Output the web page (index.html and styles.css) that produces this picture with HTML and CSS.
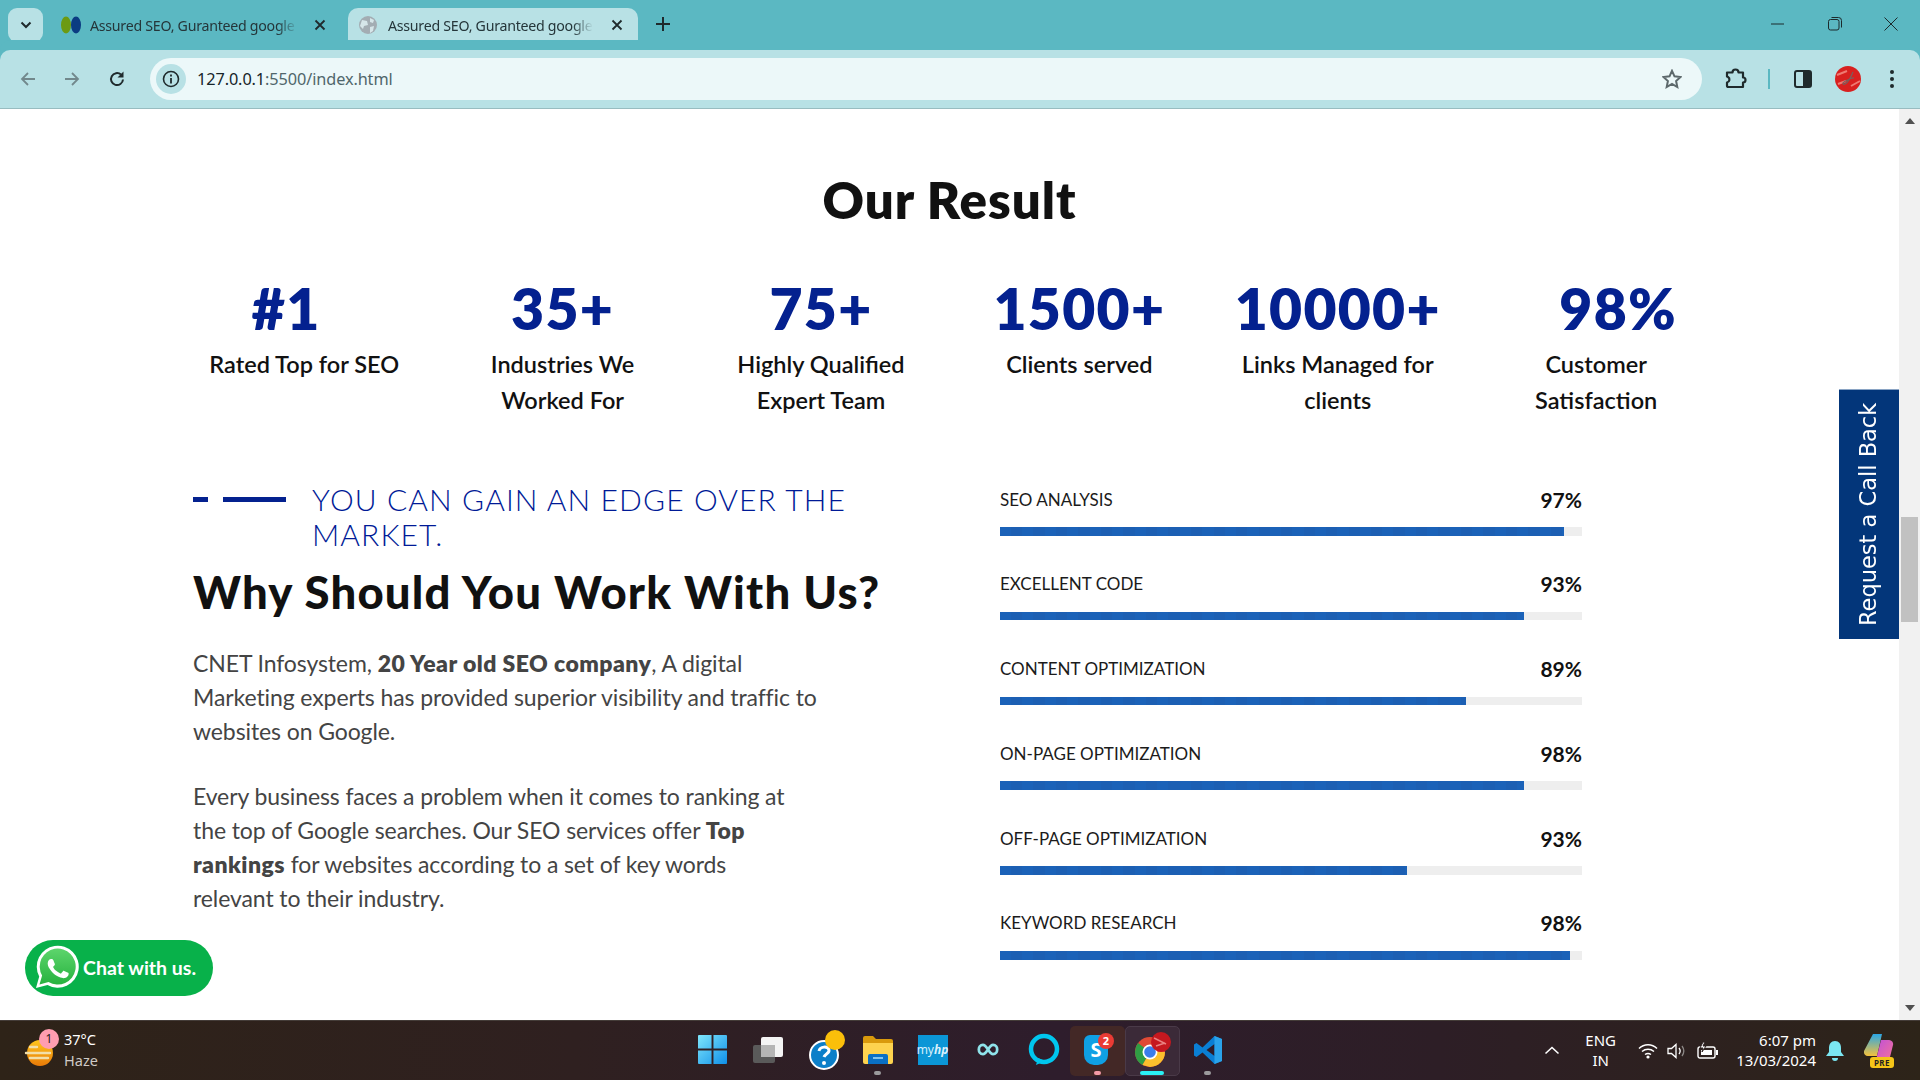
FILE: index.html
```html
<!DOCTYPE html>
<html lang="en">
<head>
<meta charset="utf-8">
<title>Assured SEO, Guranteed google ranking</title>
<link rel="stylesheet" href="styles.css">
</head>
<body>
<div class="screen">
  <header class="tabstrip">
    <button class="tab-search"><svg width="12" height="8" viewBox="0 0 12 8"><path d="M1.5 1.5 6 6l4.5-4.5" fill="none" stroke="#1f2a2c" stroke-width="2"/></svg></button>
    <div class="tab tab-first">
      <svg class="fav" width="22" height="20" viewBox="0 0 22 20"><ellipse cx="6" cy="10" rx="5" ry="8.500" fill="#6c9a12"/><ellipse cx="16" cy="10" rx="5" ry="8.500" fill="#0b3c82"/></svg>
      <span class="tab-title">Assured SEO, Guranteed google</span>
      <svg class="tab-x" width="12" height="12" viewBox="0 0 12 12"><path d="M1.5 1.5l9 9M10.500 1.500l-9 9" stroke="#1f2a2c" stroke-width="1.800"/></svg>
    </div>
    <div class="tab tab-active">
      <svg class="fav" width="20" height="20" viewBox="0 0 20 20"><circle cx="10" cy="10" r="9" fill="#a3adb3"/><path d="M4 5l5 1 1 4-4 1-1 3-3-3zM12 3l4 2-1 3-3-1zM12 12l4-1-1 5-3 2z" fill="#d6e6e9"/></svg>
      <span class="tab-title">Assured SEO, Guranteed google</span>
      <svg class="tab-x" width="12" height="12" viewBox="0 0 12 12"><path d="M1.500 1.500l9 9M10.500 1.500l-9 9" stroke="#1f2a2c" stroke-width="1.800"/></svg>
    </div>
    <svg class="tab-new" width="14" height="14" viewBox="0 0 14 14"><path d="M7 0v14M0 7h14" stroke="#1f2a2c" stroke-width="2"/></svg>
    <div class="win-controls">
      <svg width="14" height="14" viewBox="0 0 14 14"><path d="M0 7h13" stroke="#1c2a2c" stroke-width="1"/></svg>
      <svg width="14" height="14" viewBox="0 0 14 14"><rect x=".5" y="2.500" width="10.500" height="10.500" rx="2" fill="none" stroke="#1c2a2c"/><path d="M3.500.5h7a3 3 0 0 1 3 3v7" fill="none" stroke="#1c2a2c"/></svg>
      <svg width="14" height="14" viewBox="0 0 14 14"><path d="M.5.500l13 13M13.500.500l-13 13" stroke="#1c2a2c"/></svg>
    </div>
  </header>

  <nav class="toolbar">
    <svg class="nav-icon" width="16" height="16" viewBox="0 0 16 16"><path d="M15 8H2M8 2 2 8l6 6" fill="none" stroke="#72888c" stroke-width="1.800"/></svg>
    <svg class="nav-icon" width="16" height="16" viewBox="0 0 16 16"><path d="M1 8h13M8 2l6 6-6 6" fill="none" stroke="#72888c" stroke-width="1.800"/></svg>
    <svg class="nav-icon nav-reload" width="18" height="18" viewBox="0 0 18 18"><path d="M15 9.500A6 6 0 1 1 13 4.600" fill="none" stroke="#1f2a2c" stroke-width="2"/><path d="M15.500 1.500v6h-6z" fill="#1f2a2c"/></svg>
    <div class="omnibox">
      <span class="site-info"><svg width="18" height="18" viewBox="0 0 18 18"><circle cx="9" cy="9" r="7.500" fill="none" stroke="#1f2a2c" stroke-width="1.600"/><path d="M9 8v5.500M9 4.500v2" stroke="#1f2a2c" stroke-width="1.800"/></svg></span>
      <span class="url"><span class="url-host">127.0.0.1</span>:5500/index.html</span>
      <svg class="star" width="20" height="20" viewBox="0 0 20 20"><path d="m10 1.800 2.500 5.500 6 .7-4.400 4 1.200 6L10 15l-5.300 3 1.200-6-4.400-4 6-.7z" fill="none" stroke="#5d696c" stroke-width="2"/></svg>
    </div>
    <div class="toolbar-actions">
      <svg width="22" height="22" viewBox="0 0 22 22"><path d="M2 4.500h5.500a3 3 0 0 1 6 0H18v5a2.500 2.500 0 0 1 0 5V19H3.500a1.500 1.500 0 0 1-1.500-1.500v-3a3 3 0 0 0 1-5.500 3 3 0 0 0-1-.5z" fill="none" stroke="#1f2a2c" stroke-width="2.200" stroke-linejoin="round"/></svg>
      <i class="sep"></i>
      <svg width="18" height="18" viewBox="0 0 18 18"><rect x="1" y="1" width="16" height="16" rx="2" fill="none" stroke="#1f2a2c" stroke-width="2"/><rect x="9" y="1" width="8" height="16" fill="#1f2a2c"/></svg>
      <svg class="avatar" width="26" height="26" viewBox="0 0 26 26"><circle cx="13" cy="13" r="13" fill="#d8201f"/><path d="M2 9l10-4M16 20l9-5M3 18l8-3" stroke="#ee7a72" stroke-width="2"/><path d="M18 6c-2 5-4 10-8 12-2 1-3-1-1-2 4-2 8-5 10-4" fill="none" stroke="#77605f" stroke-width="1.200"/></svg>
      <svg width="6" height="20" viewBox="0 0 6 20"><circle cx="3" cy="3" r="2" fill="#1f2a2c"/><circle cx="3" cy="10" r="2" fill="#1f2a2c"/><circle cx="3" cy="17" r="2" fill="#1f2a2c"/></svg>
    </div>
  </nav>

  <div class="viewport">
    <main class="page">
      <h1 class="title">Our Result</h1>
      <section class="stats">
        <div class="stat"><div class="stat-num stat-num-left">#1</div><div class="stat-label">Rated Top for SEO</div></div>
        <div class="stat"><div class="stat-num">35+</div><div class="stat-label">Industries We<br>Worked For</div></div>
        <div class="stat"><div class="stat-num">75+</div><div class="stat-label">Highly Qualified<br>Expert Team</div></div>
        <div class="stat"><div class="stat-num">1500+</div><div class="stat-label">Clients served</div></div>
        <div class="stat"><div class="stat-num">10000+</div><div class="stat-label">Links Managed for<br>clients</div></div>
        <div class="stat"><div class="stat-num stat-num-right">98%</div><div class="stat-label">Customer<br>Satisfaction</div></div>
      </section>
      <section class="why">
        <div class="why-text">
          <div class="tagline">
            <div class="tagline-mark"><i class="mark-dash"></i><i class="mark-line"></i></div>
            <p class="tagline-text">YOU CAN GAIN AN EDGE OVER THE<br>MARKET.</p>
          </div>
          <h2 class="why-title">Why Should You Work With Us?</h2>
          <p class="copy">CNET Infosystem, <b>20 Year old SEO company</b>, A digital<br>Marketing experts has provided superior visibility and traffic to<br>websites on Google.</p>
          <p class="copy copy-next">Every business faces a problem when it comes to ranking at<br>the top of Google searches. Our SEO services offer <b>Top</b><br><b>rankings</b> for websites according to a set of key words<br>relevant to their industry.</p>
        </div>
        <div class="skills">
          <div class="skill"><div class="skill-head"><span>SEO ANALYSIS</span><b>97%</b></div><div class="track"><div class="fill" style="width:96.900%"></div></div></div>
          <div class="skill"><div class="skill-head"><span>EXCELLENT CODE</span><b>93%</b></div><div class="track"><div class="fill" style="width:90%"></div></div></div>
          <div class="skill"><div class="skill-head"><span>CONTENT OPTIMIZATION</span><b>89%</b></div><div class="track"><div class="fill" style="width:80%"></div></div></div>
          <div class="skill"><div class="skill-head"><span>ON-PAGE OPTIMIZATION</span><b>98%</b></div><div class="track"><div class="fill" style="width:90%"></div></div></div>
          <div class="skill"><div class="skill-head"><span>OFF-PAGE OPTIMIZATION</span><b>93%</b></div><div class="track"><div class="fill" style="width:70%"></div></div></div>
          <div class="skill"><div class="skill-head"><span>KEYWORD RESEARCH</span><b>98%</b></div><div class="track"><div class="fill" style="width:98%"></div></div></div>
        </div>
      </section>
      <a class="callback">Request a Call Back</a>
      <a class="chat">
        <svg width="46" height="46" viewBox="0 0 46 46"><path d="M2 44l3.200-11.500A21 21 0 1 1 13.500 41z" fill="#fff"/><defs><linearGradient id="wa" x1="0" y1="0" x2="0" y2="1"><stop offset="0" stop-color="#5dd56c"/><stop offset="1" stop-color="#27b23f"/></linearGradient></defs><path d="M5.500 40.500l2.600-9A18 18 0 1 1 14.500 38z" fill="url(#wa)"/><path d="M17.400 13.200c-.5-1.100-1-1.100-1.500-1.100h-1.300c-.4 0-1.200.2-1.800.9-.6.700-2.400 2.300-2.400 5.700s2.500 6.600 2.800 7c.3.500 4.800 7.700 11.900 10.500 5.900 2.300 7.100 1.900 8.400 1.700 1.300-.1 4.100-1.700 4.700-3.300.6-1.600.6-3 .4-3.300-.2-.3-.6-.5-1.300-.8-.7-.3-4.100-2-4.700-2.200-.6-.2-1.100-.3-1.600.4-.5.700-1.800 2.200-2.200 2.700-.4.500-.8.500-1.500.2-.7-.3-2.900-1.100-5.500-3.400-2-1.800-3.400-4-3.800-4.700-.4-.7 0-1.100.3-1.400.3-.3.7-.8 1-1.200.3-.4.500-.7.700-1.100.2-.5.100-.9 0-1.300-.2-.3-1.500-3.700-2.100-5.100z" fill="#fff" transform="translate(6 6) scale(.74)"/></svg>
        <span>Chat with us.</span>
      </a>
    </main>
    <aside class="scrollbar">
      <svg class="scroll-arrow" width="10" height="6" viewBox="0 0 10 6"><path d="M5 0l5 6H0z" fill="#505050"/></svg>
      <div class="scroll-track"><div class="scroll-thumb"></div></div>
      <svg class="scroll-arrow" width="10" height="6" viewBox="0 0 10 6"><path d="M5 6 0 0h10z" fill="#505050"/></svg>
    </aside>
  </div>

  <footer class="taskbar">
    <div class="tb-left">
      <span class="weather-icon">
        <svg width="30" height="30" viewBox="0 0 30 30"><defs><linearGradient id="sun" x1="0" y1="0" x2="0" y2="1"><stop offset="0" stop-color="#ffc61c"/><stop offset="1" stop-color="#e87a08"/></linearGradient></defs><circle cx="16" cy="15" r="13" fill="url(#sun)"/><path d="M6 9h7M2 15h24M6 20h18" stroke="#f2dfa8" stroke-width="2.400" stroke-linecap="round"/></svg>
        <b class="weather-badge">1</b>
      </span>
      <div class="weather-text"><span>37°C</span><span class="weather-sub">Haze</span></div>
    </div>
    <div class="tb-apps">
      <div class="app"><svg width="29" height="29" viewBox="0 0 30 30"><defs><linearGradient id="win" x1="0" y1="0" x2="1" y2="1"><stop offset="0" stop-color="#7fe6fb"/><stop offset="1" stop-color="#0f8fe8"/></linearGradient></defs><path d="M0 1a1 1 0 0 1 1-1h13v14H0zM16 0h13a1 1 0 0 1 1 1v13H16zM0 16h14v14H1a1 1 0 0 1-1-1zM16 16h14v13a1 1 0 0 1-1 1H16z" fill="url(#win)"/></svg></div>
      <div class="app"><svg width="30" height="26" viewBox="0 0 30 26"><rect x="0" y="8" width="22" height="18" rx="2" fill="#5a5a5a"/><rect x="8" y="0" width="22" height="20" rx="2" fill="#f4f4f4"/><rect x="8" y="8" width="14" height="12" fill="#b5b5b5"/></svg></div>
      <div class="app"><svg class="help-icon" width="36" height="40" viewBox="0 0 36 40"><circle cx="15" cy="25" r="14" fill="#0b7fc9" stroke="#fff" stroke-width="2"/><path d="M10 21c1-5 9-5 10-1 .7 3-4 4-5 7" fill="none" stroke="#fff" stroke-width="3"/><circle cx="15" cy="33" r="2" fill="#fff"/><circle cx="26" cy="10" r="10" fill="#fbbf0a"/></svg></div>
      <div class="app app-dot"><svg width="30" height="28" viewBox="0 0 30 28"><path d="M0 2a2 2 0 0 1 2-2h8l3 3h15a2 2 0 0 1 2 2v3H0z" fill="#d99a0c"/><path d="M0 7h30v19a2 2 0 0 1-2 2H2a2 2 0 0 1-2-2z" fill="#fdd34f"/><path d="M5 20a2 2 0 0 1 2-2h16a2 2 0 0 1 2 2v8H5z" fill="#0a70c5"/><rect x="10" y="21" width="10" height="2" fill="#7fc4ef"/></svg></div>
      <div class="app"><span class="myhp">my<em>hp</em></span></div>
      <div class="app"><svg width="22" height="15" viewBox="0 0 24 16"><path d="M6.500 3C3.500 3 2 5.500 2 8s1.500 5 4.500 5c4.500 0 6.500-10 11-10C20.500 3 22 5.500 22 8s-1.500 5-4.500 5c-4.500 0-6.500-10-11-10z" fill="none" stroke="#8fe3ea" stroke-width="3"/></svg></div>
      <div class="app"><svg class="alexa-icon" width="32" height="34" viewBox="0 0 32 34"><circle cx="16" cy="16" r="13" fill="none" stroke="#00c6ee" stroke-width="4.500"/><path d="M8 32l2-7 7 3z" fill="#00c6ee"/></svg></div>
      <div class="app app-skype app-dot app-dot-pink"><svg width="32" height="34" viewBox="0 0 32 34"><path d="M2 8a6 6 0 0 1 6-6h12a6 6 0 0 1 6 6v14a10 10 0 0 1-10 10h-4A10 10 0 0 1 2 22z" fill="#0fa0e4"/><text class="skype-s" x="14" y="24">S</text><circle cx="24" cy="8" r="8" fill="#ea3b34"/><text class="skype-n" x="24" y="12">2</text></svg></div>
      <div class="app app-chrome"><svg width="38" height="36" viewBox="0 0 38 36"><circle cx="16" cy="20" r="15" fill="#e04a35"/><path d="M1 20a15 15 0 0 1 3-9l12 9-7.500 13A15 15 0 0 1 1 20z" fill="#2f9e44"/><path d="M16 20h15a15 15 0 0 1-15 15l-7.500-2z" fill="#fbc02d"/><circle cx="16" cy="20" r="7.500" fill="#fff"/><circle cx="16" cy="20" r="5.800" fill="#3b7dec"/><circle cx="27" cy="10" r="10" fill="#c5181f"/><path d="M20 6l12 6M22 14l9-3" stroke="#e98080" stroke-width="1.500"/></svg></div>
      <div class="app app-dot"><svg width="30" height="30" viewBox="0 0 30 30"><path d="M21.500 1 9.500 12.500 3.500 8 1 9.500v11L3.500 22l6-4.500L21.500 29l7.500-3V4zM21.500 9v12l-8-6z" fill="#0a7fd4"/><path d="M21.500 1 29 4v22l-7.500 3z" fill="#2aa3ea"/></svg></div>
    </div>
    <div class="tb-tray">
      <svg class="tray-chevron" width="16" height="9" viewBox="0 0 16 9"><path d="M1.500 7.500 8 1.500l6.500 6" fill="none" stroke="#fff" stroke-width="1.600"/></svg>
      <div class="lang"><span>ENG</span><span>IN</span></div>
      <div class="tray-icons">
        <svg width="20" height="16" viewBox="0 0 20 16"><path d="M1 5.500c5-5 13-5 18 0M4 8.500c3.500-3 8.500-3 12 0M7 11.500c1.800-1.300 4.200-1.300 6 0" fill="none" stroke="#fff" stroke-width="1.500"/><circle cx="10" cy="14" r="1.600" fill="#fff"/></svg>
        <svg width="20" height="16" viewBox="0 0 20 16"><path d="M1 5.500h3.500L9 1.500v13l-4.500-4H1z" fill="none" stroke="#fff" stroke-width="1.300"/><path d="M12 5c1.400 1.800 1.400 4.200 0 6" fill="none" stroke="#fff" stroke-width="1.300"/><path d="M15 3c2.200 3 2.200 7 0 10" fill="none" stroke="#8a8684" stroke-width="1.300"/></svg>
        <svg width="22" height="18" viewBox="0 0 22 18"><rect x="1" y="5" width="17" height="11" rx="2" fill="none" stroke="#fff" stroke-width="1.400"/><rect x="4" y="8" width="11" height="5" fill="#fff"/><rect x="19" y="8" width="2" height="5" fill="#fff"/><path d="M6 0 3 6h3l-1 4 4-6H6l2-4z" fill="#fff" stroke="#2c2120"/></svg>
      </div>
      <div class="clock"><span>6:07 pm</span><span>13/03/2024</span></div>
      <svg class="bell" width="18" height="22" viewBox="0 0 18 22"><path d="M9 1c4 0 6 3 6 7v4l3 4H0l3-4V8c0-4 2-7 6-7z" fill="#7be7f2"/><path d="M6 18h6a3 3 0 0 1-6 0z" fill="#7be7f2"/></svg>
      <span class="copilot">
        <svg width="30" height="26" viewBox="0 0 30 26"><defs><linearGradient id="cp1" x1="0" y1="0" x2="0" y2="1"><stop offset="0" stop-color="#2aa6e6"/><stop offset="1" stop-color="#f4c23c"/></linearGradient><linearGradient id="cp2" x1="0" y1="0" x2="1" y2="1"><stop offset="0" stop-color="#c050d8"/><stop offset="1" stop-color="#f3739a"/></linearGradient></defs><path d="M9 0h9l-5 22H4a4 4 0 0 1-4-5z" fill="url(#cp1)"/><path d="M17 6h8a4 4 0 0 1 4 5l-3 12a4 4 0 0 1-4 3H12z" fill="url(#cp2)"/></svg>
        <b class="pre">PRE</b>
      </span>
    </div>
  </footer>
</div>
</body>
</html>
```
FILE: styles.css
```css
* { box-sizing: border-box; }
html, body { margin: 0; height: 100%; overflow: hidden; }
body { font-family: "Lato", "Liberation Sans", sans-serif; background: #fff; }
p, h1, h2 { margin: 0; }

.screen { display: flex; flex-direction: column; width: 1920px; height: 1080px; }

/* browser tabs */
.tabstrip { flex: 0 0 50px; display: flex; align-items: flex-end; background: #5bb8c2; padding-left: 8px; font-family: "Noto Sans", sans-serif; }
.tab-search { width: 35px; height: 34px; margin-bottom: 8px; border: 0; border-radius: 9px; background: #b8e1e5; display: flex; align-items: center; justify-content: center; padding: 0; }
.tab { width: 290px; height: 42px; display: flex; align-items: center; padding: 0 15px 8px 10px; gap: 10px; font-size: 14.200px; letter-spacing: -.27px; color: #25363a; border-radius: 10px 10px 0 0; margin-left: 5px; }
.tab-first { padding-left: 12px; padding-right: 12px; gap: 8px; }
.tab-active { background: #b8e1e5; margin-left: 10px; }
.fav { flex: none; }
.tab-title { flex: 1; white-space: nowrap; -webkit-mask-image: linear-gradient(90deg, #000 90%, transparent); mask-image: linear-gradient(90deg, #000 90%, transparent); }
.tab-x { flex: none; margin-left: 8px; }
.tab-new { margin: 0 0 19px 18px; }
.win-controls { margin-left: auto; align-self: flex-start; display: flex; gap: 42.500px; padding: 17px 22px 0 0; }

/* toolbar */
.toolbar { flex: 0 0 59px; display: flex; align-items: center; padding: 0 0 0 20px; background: #b8e1e5; border-bottom: 1px solid #98bcc0; border-radius: 10px 10px 0 0; box-shadow: 0 -10px 0 #5bb8c2; font-family: "Noto Sans", sans-serif; }
.nav-icon { flex: none; margin-right: 28px; }
.nav-reload { margin-right: 0; }
.omnibox { margin-left: 24px; flex: 0 0 1552px; height: 42px; display: flex; align-items: center; padding: 0 20px 0 6px; border-radius: 21px; background: #ecf8f9; }
.site-info { width: 30px; height: 30px; border-radius: 50%; background: #b8e1e5; display: flex; align-items: center; justify-content: center; }
.url { margin-left: 11px; font-size: 16.300px; color: #50666b; letter-spacing: -.1px; }
.url-host { color: #16252a; }
.star { margin-left: auto; }
.toolbar-actions { display: flex; align-items: center; padding-left: 23px; gap: 0; }
.sep { width: 2px; height: 20px; background: #5bb8c2; margin: 0 24px 0 21px; }
.avatar { margin: 0 28px 0 23px; }

/* page */
.viewport { flex: 1; display: flex; min-height: 0; }
.page { position: relative; flex: 1; overflow: hidden; padding-top: 61px; background: #fff; }
.title { text-align: center; font-size: 51px; line-height: 60px; font-weight: 800; letter-spacing: .95px; color: #111; }
.stats { display: grid; grid-template-columns: repeat(6, 258.400px); margin: 46px 0 0 175px; text-align: center; }
.stat-num { font-size: 57px; line-height: 64px; font-weight: 800; letter-spacing: 1.300px; color: #04218f; }
.stat-num-left { padding-right: 36px; }
.stat-num-right { padding-left: 44px; }
.stat-label { margin-top: 6px; font-size: 23.500px; line-height: 36px; font-weight: 600; color: #111; }

.why { display: grid; grid-template-columns: 807px 582px; margin-top: 64px; padding-left: 193px; }
.tagline { display: flex; gap: 26px; }
.tagline-mark { flex: none; display: flex; gap: 15px; height: 5px; margin-top: 15px; }
.mark-dash { width: 15px; background: #04218f; }
.mark-line { width: 63px; background: #04218f; }
.tagline-text { font-size: 30px; line-height: 35px; font-weight: 300; color: #001a96; letter-spacing: 1.100px; }
.why-title { margin-top: 12px; font-size: 45.500px; line-height: 56px; font-weight: 900; letter-spacing: 1.180px; color: #111; white-space: nowrap; }
.copy { margin-top: 26px; font-size: 23px; line-height: 34px; font-weight: 400; letter-spacing: -.1px; color: #444; white-space: nowrap; }
.copy b { font-weight: 800; letter-spacing: .45px; }
.copy-next { margin-top: 31px; }
.skills { display: flex; flex-direction: column; gap: 34.200px; margin-top: 3px; }
.skill-head { display: flex; justify-content: space-between; align-items: center; height: 28px; font-size: 17px; color: #1b1b1b; }
.skill-head b { font-size: 21px; font-weight: 700; color: #111; }
.track { height: 8.600px; margin-top: 14px; background: #eee; }
.fill { height: 100%; background: repeating-linear-gradient(90deg, #1b62b8 0 11px, #1c5fb3 11px 22.500px); }

/* overlays on the page */
.callback { position: absolute; right: 0; top: 280px; width: 60px; height: 250px; display: flex; align-items: center; justify-content: center; padding-left: 2px; background: #03367a; border-bottom: 1px solid #8aa4c4; color: #fff; font-family: "DejaVu Sans", sans-serif; font-size: 22.500px; writing-mode: vertical-rl; transform: rotate(180deg); }
.chat { position: absolute; left: 25px; top: 831px; width: 188px; height: 56px; display: flex; align-items: center; gap: 3px; padding: 0 0 2px 9px; border-radius: 28px; background: #08b14a; color: #fff; font-size: 19.500px; font-weight: 700; }

/* scrollbar */
.scrollbar { flex: 0 0 21px; display: flex; flex-direction: column; align-items: center; background: #f1f1f1; padding: 9px 0; }
.scroll-track { flex: 1; width: 100%; position: relative; }
.scroll-thumb { position: absolute; left: 2px; right: 2px; top: 393px; height: 105px; background: #c1c1c1; }

/* taskbar */
.taskbar { flex: 0 0 60px; display: grid; grid-template-columns: 1fr auto 1fr; align-items: center; border-top: 1px solid #443c38; background: linear-gradient(90deg, #2e2318, #2f2020 30%, #2e1d2c 55%, #2d1e26 75%, #2d2419); color: #fff; font-family: "Noto Sans", sans-serif; font-size: 15px; }
.tb-left { display: flex; align-items: center; padding-left: 24px; gap: 6px; }
.weather-icon { position: relative; width: 34px; height: 34px; display: flex; align-items: flex-end; }
.weather-badge { position: absolute; left: 15px; top: -5px; width: 20px; height: 20px; border-radius: 50%; background: #ff9db0; color: #2a1c1c; font-size: 12px; font-weight: 400; text-align: center; line-height: 20px; }
.weather-text { display: flex; flex-direction: column; line-height: 21px; padding-bottom: 2px; font-size: 14.500px; }
.weather-sub { color: #cfcac6; }
.tb-apps { display: flex; }
.app { position: relative; width: 55px; height: 50px; display: flex; align-items: center; justify-content: center; padding-bottom: 2px; }
.help-icon { margin-left: 8px; }
.alexa-icon { margin-left: 3px; }
.app-dot::after { content: ""; position: absolute; left: 24px; bottom: 1px; width: 7px; height: 4px; border-radius: 2px; background: #9b9a9c; }
.app-dot-pink::after { background: #f39aa6; }
.app-skype { background: #432826; border-radius: 5px; }
.app-chrome { background: #3b2a38; border: 1px solid #4a3a48; border-radius: 5px; }
.app-chrome::after { content: ""; position: absolute; left: 14px; bottom: 0; width: 24px; height: 4px; border-radius: 2px; background: #2af0f5; }
.myhp { width: 30px; height: 30px; background: #0b96d6; display: flex; align-items: center; justify-content: center; font-size: 12px; color: #d8f0fb; }
.myhp em { font-weight: 700; }
.skype-s { font-size: 20px; font-weight: 700; fill: #fff; text-anchor: middle; }
.skype-n { font-size: 11px; font-weight: 700; fill: #fff; text-anchor: middle; }
.tb-tray { display: flex; align-items: center; justify-self: end; }
.tray-chevron { margin-right: 19px; }
.lang { width: 44px; display: flex; flex-direction: column; align-items: center; line-height: 20px; margin-right: 15px; padding-bottom: 2px; }
.tray-icons { display: flex; align-items: center; gap: 9.500px; margin-right: 17.500px; }
.clock { display: flex; flex-direction: column; align-items: flex-end; line-height: 20px; margin-right: 10px; padding-bottom: 2px; }
.bell { margin-right: 20px; }
.copilot { position: relative; width: 32px; height: 34px; margin-right: 24px; }
.pre { position: absolute; left: 6px; bottom: 0; width: 24px; height: 11px; border-radius: 3px; background: #f5c518; color: #222; font-size: 8px; line-height: 11px; text-align: center; letter-spacing: .5px; }
```
